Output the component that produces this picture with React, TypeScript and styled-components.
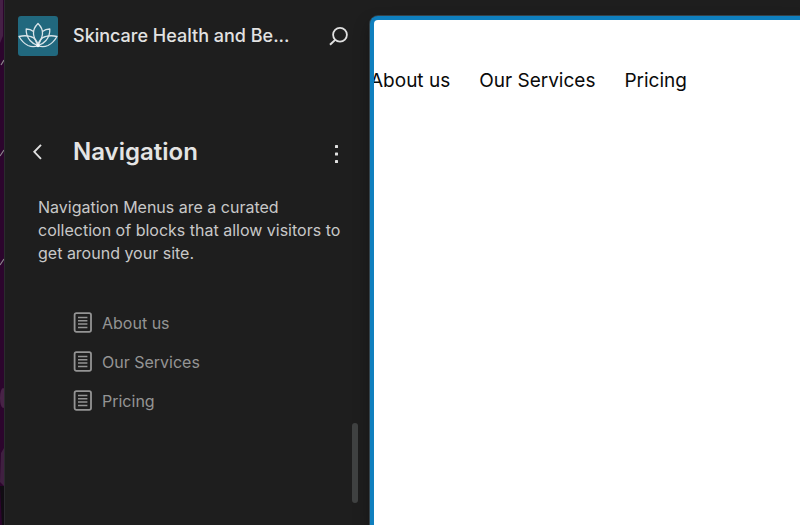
import React from "react";
import styled, { createGlobalStyle } from "styled-components";

const GlobalStyle = createGlobalStyle`
  *, *::before, *::after { box-sizing: border-box; }
  body {
    margin: 0;
    background: #1e1e1e;
    font-family: Inter, "Liberation Sans", sans-serif;
    -webkit-font-smoothing: antialiased;
  }
`;

const Editor = styled.div`
  display: flex;
  min-height: 100vh;
  overflow: hidden;
  background: #1e1e1e;
`;

const DesktopEdge = styled.div`
  flex: 0 0 5px;
  display: flex;
  background: #2c052d;
  border-right: 1px solid #2b2b2e;
  overflow: hidden;
`;

const Sidebar = styled.aside`
  position: relative;
  flex: 0 0 365px;
  display: flex;
  flex-direction: column;
  padding: 16px 17px 16px 13px;
`;

const SiteHeader = styled.header`
  display: flex;
  align-items: center;
  height: 40px;
  padding-right: 3px;
`;

const SiteLogo = styled.a`
  display: block;
  width: 40px;
  height: 40px;
  margin-right: 15px;
  border-radius: 3px;
  overflow: hidden;
  background: #21687e;
`;

const SiteTitle = styled.a`
  flex: 1;
  color: #e2e2e2;
  font-size: 18px;
  font-weight: 500;
  line-height: 24px;
  text-decoration: none;
  white-space: nowrap;
`;

const IconButton = styled.button`
  display: flex;
  align-items: center;
  justify-content: center;
  width: 24px;
  height: 24px;
  padding: 0;
  border: 0;
  background: none;
  color: #e0e0e0;
  cursor: pointer;
`;

const PanelHeader = styled.div`
  display: flex;
  align-items: center;
  height: 32px;
  margin-top: 80px;
  padding: 0 5px 0 8px;
`;

const PanelTitle = styled.h1`
  flex: 1;
  margin: 0;
  padding-left: 23px;
  color: #e4e4e4;
  font-size: 24px;
  font-weight: 600;
  line-height: 32px;
`;

const Description = styled.p`
  margin: 28px 0 0;
  padding: 0 0 0 20px;
  color: #c8c8c8;
  font-size: 16px;
  line-height: 23px;
`;

const MenuList = styled.ul`
  display: flex;
  flex-direction: column;
  gap: 15px;
  margin: 46px 0 0;
  padding: 0 0 0 54px;
  list-style: none;
`;

const MenuLink = styled.a`
  display: flex;
  align-items: center;
  gap: 9px;
  color: #949494;
  font-size: 16px;
  line-height: 24px;
  text-decoration: none;
`;

const ScrollThumb = styled.div`
  position: absolute;
  right: 12px;
  bottom: 22px;
  width: 6px;
  height: 80px;
  border-radius: 3px;
  background: #3f4141;
`;

const Preview = styled.main`
  flex: 1;
  min-width: 0;
  margin-top: 16px;
  border-top: 4px solid #0f7fbe;
  border-left: 4px solid #0f7fbe;
  border-top-left-radius: 8px;
  box-shadow: 0 0 0 1px #34424a, 0 8px 16px rgba(0, 0, 0, 0.35);
  overflow: hidden;
  background: #fff;
`;

const SiteNav = styled.nav`
  display: flex;
  gap: 29px;
  margin: 48px 0 0 -4px;
`;

const SiteLink = styled.a`
  color: #0a0a0a;
  font-size: 19px;
  line-height: 25px;
  text-decoration: none;
  white-space: nowrap;
`;

const pages = ["About us", "Our Services", "Pricing"];

const LotusMark = () => (
  <svg width="40" height="40" viewBox="0 0 40 40" fill="none" stroke="#d9e4e9" strokeWidth="1.3" strokeLinejoin="round" aria-hidden="true">
    <path d="M20 7.5C16.5 11 15 14 15.5 18C16 22.5 18 26 20 29.5C22 26 24 22.5 24.5 18C25 14 23.5 11 20 7.5Z" />
    <path d="M15.5 15.5C13.5 13.8 11 13 8.2 13C8 17 9 21 12 24.5C14 27 17 28.5 20 29.5" />
    <path d="M24.5 15.5C26.5 13.8 29 13 31.8 13C32 17 31 21 28 24.5C26 27 23 28.5 20 29.5" />
    <path d="M20 29.5C19 24.5 16.5 21.5 12.5 20.5C9 19.5 5 19.5 1 20.5C3 24 6 27.5 10 29.5C13.5 31 17 31 20 29.5Z" />
    <path d="M20 29.5C21 24.5 23.5 21.5 27.5 20.5C31 19.5 35 19.5 39 20.5C37 24 34 27.5 30 29.5C26.5 31 23 31 20 29.5Z" />
    <circle cx="20" cy="29.5" r="1.8" fill="#f4f8fa" stroke="none" />
  </svg>
);

const SearchIcon = () => (
  <svg width="24" height="24" viewBox="0 0 24 24" fill="none" stroke="currentColor" strokeWidth="1.8" aria-hidden="true">
    <circle cx="14" cy="10.8" r="6.9" />
    <path d="M9.4 15.6L4 20.8" strokeWidth="2" />
  </svg>
);

const BackIcon = () => (
  <svg width="24" height="24" viewBox="0 0 24 24" fill="none" stroke="currentColor" strokeWidth="1.9" aria-hidden="true">
    <path d="M15 4.8L8.3 11.8L15 18.8" />
  </svg>
);

const MoreIcon = () => (
  <svg width="24" height="24" viewBox="0 0 24 24" fill="currentColor" aria-hidden="true">
    <rect x="11" y="5" width="3" height="3" rx="0.6" />
    <rect x="11" y="12.5" width="3" height="3" rx="0.6" />
    <rect x="11" y="20" width="3" height="3" rx="0.6" />
  </svg>
);

const PageIcon = () => (
  <svg width="21" height="22" viewBox="0 0 21 22" fill="none" stroke="currentColor" strokeWidth="1.8" aria-hidden="true">
    <rect x="2.6" y="1.2" width="16.4" height="18.6" rx="1.8" />
    <path d="M6 5.5H15.4M6 8.8H15.4M6 12.1H15.4M6 15.4H15.4" strokeWidth="1.5" />
  </svg>
);

const WallpaperDetails = () => (
  <svg width="4" height="525" viewBox="0 0 4 525" fill="none" aria-hidden="true">
    <path d="M0 0H3V36L0 43Z" fill="#452046" />
    <path d="M1 65L4 60M0 156L4 150M0 265L4 259" stroke="#8c848c" strokeWidth="1.2" />
    <ellipse cx="3" cy="398" rx="3" ry="10" fill="#482347" />
    <path d="M1 453L4 448V486L0 482Z" fill="#402041" />
    <path d="M0 486H4V525H2Z" fill="#110c13" />
  </svg>
);

export default function App() {
  return (
    <>
      <GlobalStyle />
      <Editor>
        <DesktopEdge>
          <WallpaperDetails />
        </DesktopEdge>
        <Sidebar>
          <SiteHeader>
            <SiteLogo href="#" aria-label="Site home">
              <LotusMark />
            </SiteLogo>
            <SiteTitle href="#">Skincare Health and Be...</SiteTitle>
            <IconButton type="button" aria-label="Search">
              <SearchIcon />
            </IconButton>
          </SiteHeader>
          <PanelHeader>
            <IconButton type="button" aria-label="Back">
              <BackIcon />
            </IconButton>
            <PanelTitle>Navigation</PanelTitle>
            <IconButton type="button" aria-label="Actions">
              <MoreIcon />
            </IconButton>
          </PanelHeader>
          <Description>
            Navigation Menus are a curated collection of blocks that allow visitors to get around your site.
          </Description>
          <MenuList>
            {pages.map((page) => (
              <li key={page}>
                <MenuLink href="#">
                  <PageIcon />
                  {page}
                </MenuLink>
              </li>
            ))}
          </MenuList>
          <ScrollThumb />
        </Sidebar>
        <Preview>
          <SiteNav>
            {pages.map((page) => (
              <SiteLink href="#" key={page}>
                {page}
              </SiteLink>
            ))}
          </SiteNav>
        </Preview>
      </Editor>
    </>
  );
}
